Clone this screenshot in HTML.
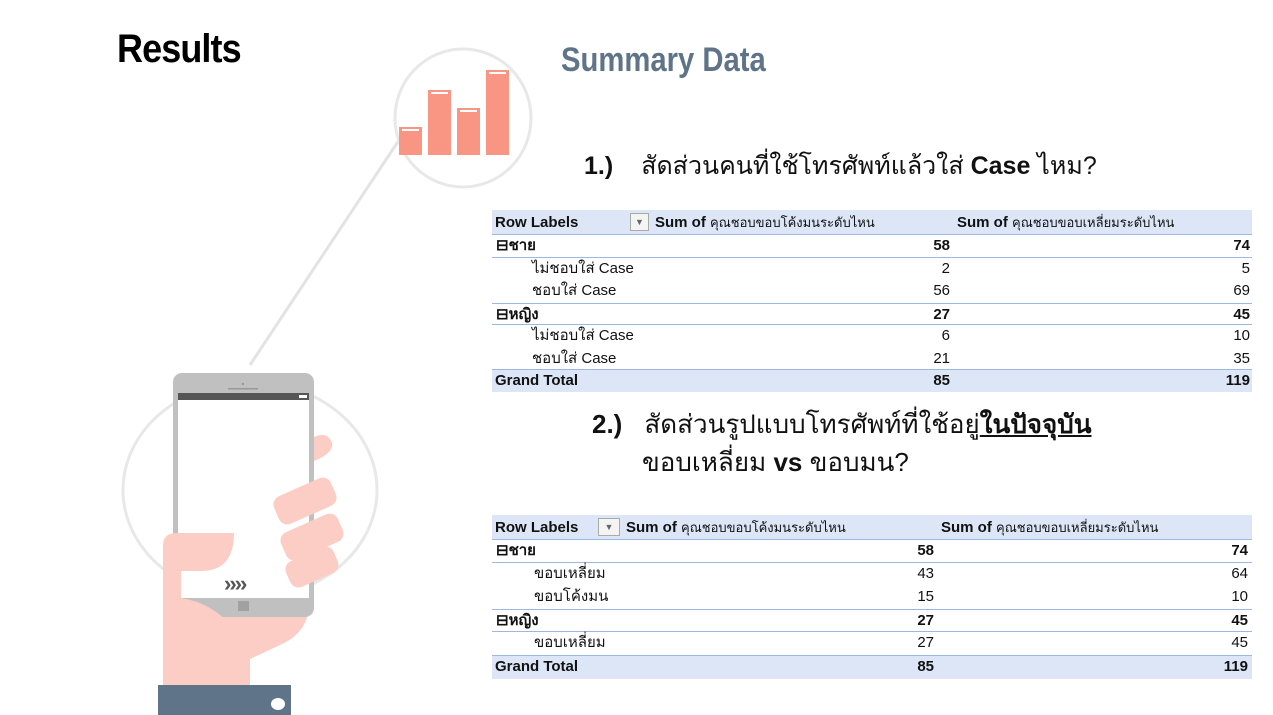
<!DOCTYPE html>
<html><head><meta charset="utf-8"><style>
*{margin:0;padding:0;box-sizing:border-box}
body{width:1273px;height:715px;background:#fff;position:relative;overflow:hidden;font-family:"Liberation Sans","Noto Sans CJK SC",sans-serif}
.abs{position:absolute}
.t{position:absolute;left:492px;width:760px;font-size:15px;color:#111;font-family:"Liberation Sans","Noto Sans CJK SC",sans-serif}
.r{position:absolute;left:0;width:760px;height:22.5px;border-bottom:1px solid #9fb6df;line-height:22px}
.r span{position:absolute;white-space:nowrap}
.hd{background:#dce6f7;font-weight:bold}
.b{font-weight:bold}
</style></head><body>
<div class="abs" style="left:117px;top:27px;font-size:40px;font-weight:bold;letter-spacing:-1px;font-family:'Liberation Sans',sans-serif;transform:scaleX(0.9);transform-origin:left">Results</div>
<div class="abs" style="left:561px;top:41px;font-size:34px;font-weight:bold;color:#5f7488;transform:scaleX(0.86);transform-origin:left">Summary Data</div>
<div class="abs" style="left:584px;top:146px;font-size:25px;font-weight:bold;color:#111;white-space:nowrap">1.)<span style="margin-left:28px;font-weight:normal">สัดส่วนคนที่ใช้โทรศัพท์แล้วใส่ <b>Case</b> ไหม?</span></div>
<div class="abs" style="left:592px;top:404px;font-size:26px;color:#111;white-space:nowrap"><b>2.)</b><span style="margin-left:22px">สัดส่วนรูปแบบโทรศัพท์ที่ใช้อยู่<b style="text-decoration:underline">ในปัจจุบัน</b></span></div>
<div class="abs" style="left:642px;top:442px;font-size:26px;color:#111;white-space:nowrap">ขอบเหลี่ยม <b>vs</b> ขอบมน?</div>

<svg class="abs" style="left:0;top:0" width="540" height="715">
<line x1="250" y1="365" x2="403" y2="134" stroke="#e3e3e3" stroke-width="3"/>
<ellipse cx="463" cy="118" rx="68" ry="69" fill="#fff" stroke="#e8e8e8" stroke-width="3"/>
<rect x="399" y="127" width="23" height="28" fill="#f89683"/><rect x="402" y="129" width="17" height="2" fill="#fff"/>
<rect x="428" y="90" width="23" height="65" fill="#f89683"/><rect x="431" y="92" width="17" height="2" fill="#fff"/>
<rect x="457" y="108" width="23" height="47" fill="#f89683"/><rect x="460" y="110" width="17" height="2" fill="#fff"/>
<rect x="486" y="70" width="23" height="85" fill="#f89683"/><rect x="489" y="72" width="17" height="2" fill="#fff"/>
<ellipse cx="250" cy="490" rx="127" ry="108" fill="none" stroke="#e8e8e8" stroke-width="3"/>
<path d="M163 600 h145 v12 q-3 22-28 33 l-30 14 v26 h-87z" fill="#fccdc4"/>
<rect x="173" y="373" width="141" height="244" rx="9" fill="#bfc0bf"/>
<rect x="178" y="393" width="131" height="205" fill="#fff"/>
<rect x="178" y="393" width="131" height="7" fill="#555"/>
<rect x="299" y="395" width="8" height="3" fill="#fff"/>
<circle cx="243" cy="384" r="1.2" fill="#999"/>
<rect x="228" y="388" width="30" height="1.5" fill="#999"/>
<rect x="238" y="601" width="11" height="10" fill="#a0a2a0"/>
<text x="224" y="591" font-size="22" fill="#555" font-family="Liberation Sans" font-weight="bold" letter-spacing="-2">››››</text>
<path d="M314 437 q14-6 18 6 q2 10-18 18z" fill="#fccdc4"/>
<rect x="274" y="486" width="62" height="30" rx="9" fill="#fccdc4" transform="rotate(-24 305 501)"/>
<rect x="281" y="522" width="62" height="30" rx="9" fill="#fccdc4" transform="rotate(-24 312 537)"/>
<rect x="286" y="553" width="52" height="28" rx="9" fill="#fccdc4" transform="rotate(-24 312 567)"/>
<path d="M163 545 q0-12 14-12 h57 q0 38-33 38 h-20 v27 q32 5 52 30 l15 17 l-28 0 h-57z" fill="#fccdc4"/>
<path d="M230 617 h20 l-10 12z" fill="#fccdc4"/>
<rect x="158" y="685" width="133" height="30" fill="#5f7488"/>
<ellipse cx="278" cy="704" rx="7" ry="6" fill="#fff"/>
</svg>

<div class="t" style="top:210px;height:182px">
<div class="r hd" style="top:0;height:25px;line-height:25px"><span style="left:3px">Row Labels</span><span style="left:138px;top:3px;width:19px;height:18px;border:1px solid #aaa;background:#f4f4f4;font-size:9px;line-height:16px;text-align:center;color:#666">▼</span><span style="left:163px">Sum of <span style="position:static;font-weight:normal;font-size:13px">คุณชอบขอบโค้งมนระดับไหน</span></span><span style="left:465px">Sum of <span style="position:static;font-weight:normal;font-size:13px">คุณชอบขอบเหลี่ยมระดับไหน</span></span></div>
<div class="r b" style="top:25px"><span style="left:4px">⊟ชาย</span><span style="right:302px">58</span><span style="right:2px">74</span></div>
<div class="r" style="top:47.5px;border:0"><span style="left:40px">ไม่ชอบใส่ Case</span><span style="right:302px">2</span><span style="right:2px">5</span></div>
<div class="r" style="top:70px;border:0"><span style="left:40px">ชอบใส่ Case</span><span style="right:302px">56</span><span style="right:2px">69</span></div>
<div class="r b" style="top:92.5px;border-top:1px solid #9fb6df"><span style="left:4px">⊟หญิง</span><span style="right:302px">27</span><span style="right:2px">45</span></div>
<div class="r" style="top:115px;border:0"><span style="left:40px">ไม่ชอบใส่ Case</span><span style="right:302px">6</span><span style="right:2px">10</span></div>
<div class="r" style="top:137.5px;border:0"><span style="left:40px">ชอบใส่ Case</span><span style="right:302px">21</span><span style="right:2px">35</span></div>
<div class="r hd" style="top:159px;border-top:1px solid #9fb6df;border-bottom:0"><span style="left:3px">Grand Total</span><span style="right:302px">85</span><span style="right:2px">119</span></div>
</div>

<div class="t" style="top:515px;height:165px">
<div class="r hd" style="top:0;height:25px;line-height:25px"><span style="left:3px">Row Labels</span><span style="left:106px;top:3px;width:22px;height:18px;border:1px solid #aaa;background:#f4f4f4;font-size:9px;line-height:16px;text-align:center;color:#666">▼</span><span style="left:134px">Sum of <span style="position:static;font-weight:normal;font-size:13px">คุณชอบขอบโค้งมนระดับไหน</span></span><span style="left:449px">Sum of <span style="position:static;font-weight:normal;font-size:13px">คุณชอบขอบเหลี่ยมระดับไหน</span></span></div>
<div class="r b" style="top:25px"><span style="left:4px">⊟ชาย</span><span style="right:318px">58</span><span style="right:4px">74</span></div>
<div class="r" style="top:48px;border:0"><span style="left:42px">ขอบเหลี่ยม</span><span style="right:318px">43</span><span style="right:4px">64</span></div>
<div class="r" style="top:71px;border:0"><span style="left:42px">ขอบโค้งมน</span><span style="right:318px">15</span><span style="right:4px">10</span></div>
<div class="r b" style="top:94px;border-top:1px solid #9fb6df"><span style="left:4px">⊟หญิง</span><span style="right:318px">27</span><span style="right:4px">45</span></div>
<div class="r" style="top:117px;border:0"><span style="left:42px">ขอบเหลี่ยม</span><span style="right:318px">27</span><span style="right:4px">45</span></div>
<div class="r hd" style="top:140px;border-top:1px solid #9fb6df;border-bottom:0;height:24px"><span style="left:3px">Grand Total</span><span style="right:318px">85</span><span style="right:4px">119</span></div>
</div>
</body></html>
